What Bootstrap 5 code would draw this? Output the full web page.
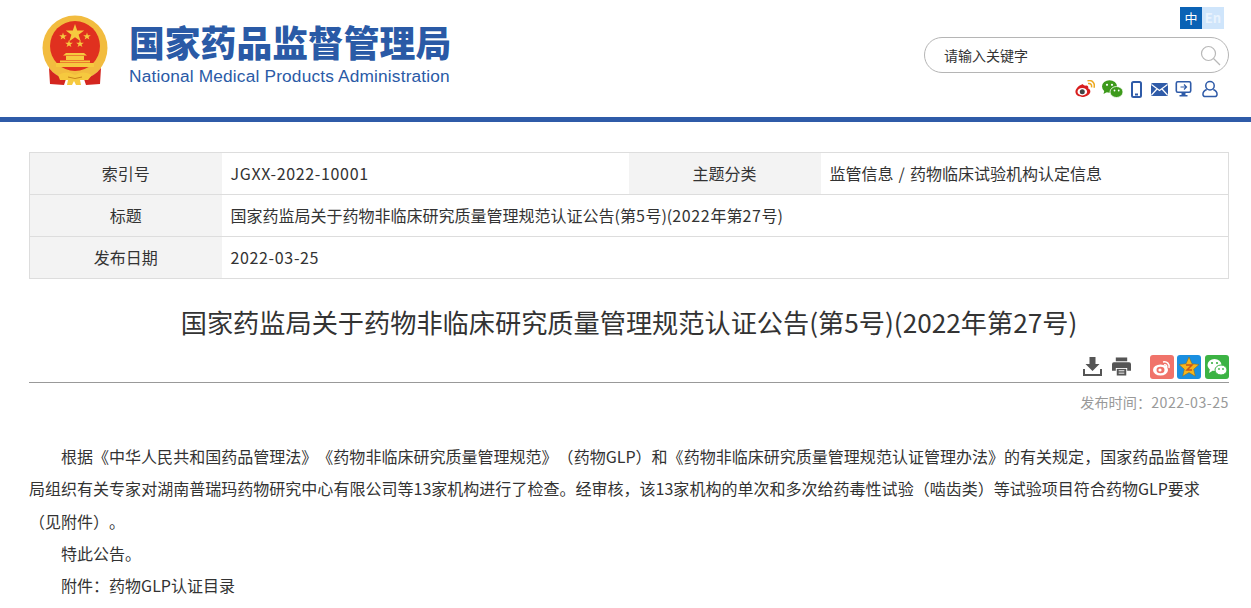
<!DOCTYPE html>
<html lang="zh-CN">
<head>
<meta charset="utf-8">
<title>国家药品监督管理局</title>
<link href="https://cdn.jsdelivr.net/npm/bootstrap@5.3.0/dist/css/bootstrap.min.css" rel="stylesheet">
<style>
html,body{margin:0;background:#fff;}
body{font-family:"Noto Sans CJK SC",sans-serif;font-size:16px;color:#333;text-spacing-trim:space-all;}
.site-head{height:122px;border-bottom:5px solid #2f5ba8;padding:0 22px 0 42px;}
.emblem{width:66px;height:70px;margin-top:15px;flex:none;}
.brand{margin-left:21px;margin-top:20px;width:330px;}
.brand-cn{font-weight:900;font-size:35.8px;line-height:43px;color:#2a5aa6;white-space:nowrap;}
.brand-en{font-family:"Liberation Sans",sans-serif;font-size:17.3px;letter-spacing:.17px;line-height:20px;color:#2a5aa6;margin-top:3px;white-space:nowrap;}
.head-tools{width:305px;}
.lang{height:22px;margin-top:7px;margin-right:5px;font-size:13px;}
.lang span{width:22px;height:22px;line-height:22px;text-align:center;display:block;}
.lang-on{background:#0a62b5;color:#fff;}
.lang-off{background:#cfe5fb;color:#e9f3fd;font-weight:700;}
.searchbox{height:36px;border:1px solid #b5b5b5;border-radius:18px;margin-top:8px;padding:0 7px 0 20px;}
.searchbox span{font-size:14px;color:#333;margin-left:-1px;}
.social{margin-top:5px;height:22px;padding-right:11px;}
.page-wrap{padding:0 22px 0 29px;}
.info-table{width:1199px;margin:30px 0 0;table-layout:fixed;font-size:16px;border-color:#ddd;color:#333;}
.info-table td{height:42px;padding:0 9px 2px;vertical-align:middle;line-height:22px;border-left-width:0;border-right-width:0;}
.info-table td:first-child{border-left-width:1px;}
.info-table td:last-child{border-right-width:1px;}
.info-table .lbl{background:#f3f3f3;text-align:center;--bs-table-bg:#f3f3f3;}
.lat{letter-spacing:.65px;}
.lat-s{letter-spacing:.5px;}
.wide-sep{word-spacing:1.5px;}
.doc-title{font-weight:400;font-size:26.2px;line-height:40px;text-align:center;margin:23px 0 0;color:#333;white-space:nowrap;}
.share-row{height:40px;margin-top:1px;padding-top:8px;border-bottom:1px solid #999;}
.meta-line{font-size:14.2px;line-height:20px;color:#999;text-align:right;margin-top:9px;}
.article{margin-top:28px;font-size:16px;line-height:32.3px;color:#333;letter-spacing:.02px;}
.article p{margin:0;text-indent:32px;}
svg{display:block;flex:none;}
.gap-7{margin-left:7px;}.gap-8{margin-left:8px;}.gap-9{margin-left:9px;}.gap-10{margin-left:10px;}.gap-19{margin-left:19px;}.gap-3{margin-left:3px;}.gap-4{margin-left:4px;}
</style>
</head>
<body>
<header class="site-head d-flex justify-content-between">
  <div class="d-flex">
    <svg class="emblem" viewBox="0 0 66 70">
      <circle cx="33" cy="33" r="32.500" fill="#f2bc3f"/>
      <circle cx="33" cy="31" r="25" fill="#e0301f"/>
      <path d="M33 9l2.200 6.600h7l-5.600 4.100 2.100 6.600L33 22.200l-5.700 4.100 2.100-6.600-5.600-4.100h7z" fill="#f6c93f"/>
      <g fill="#f6c93f"><path d="M21 17.500l.9 2.700h2.900l-2.300 1.700.9 2.700-2.400-1.700-2.400 1.700.9-2.700-2.300-1.700h2.900z"/><path d="M45 17.500l.9 2.700h2.900l-2.300 1.700.9 2.700-2.400-1.700-2.400 1.700.9-2.700-2.300-1.700h2.900z"/><path d="M27 25l.9 2.700h2.900l-2.300 1.700.9 2.700-2.400-1.700-2.400 1.700.9-2.700-2.300-1.700h2.900z"/><path d="M38 25l.9 2.700h2.900l-2.300 1.700.9 2.700-2.400-1.700-2.400 1.700.9-2.700-2.300-1.700h2.900z"/>
      <path d="M24 38h18l3 2.500H21z"/><rect x="24" y="41" width="18" height="4"/><rect x="18" y="45.500" width="30" height="2"/><rect x="14" y="48" width="38" height="4"/></g>
      <path d="M7 50 Q16 61 33 61 Q50 61 59 50 L59 53 Q50 65 33 65 Q16 65 7 53Z" fill="#f2bc3f"/>
      <path d="M7 53 Q13 61 24 64 L22 70 L8 69Z M59 53 Q53 61 42 64 L44 70 L58 69Z" fill="#d4261f"/>
      <path d="M16 60 q8.500-5 17 0 q8.500-5 17 0 l-4 5 h-8 l1 5 h-5 l-2-4 -2 4 h-5 l1-5 h-8z" fill="#f6c93f"/>
      <path d="M26 62 q7 3 14 0" fill="none" stroke="#c9841c" stroke-width="1"/>
    </svg>
    <div class="brand">
      <div class="brand-cn">国家药品监督管理局</div>
      <div class="brand-en">National Medical Products Administration</div>
    </div>
  </div>
  <div class="head-tools">
    <div class="lang d-flex justify-content-end"><span class="lang-on">中</span><span class="lang-off">En</span></div>
    <div class="searchbox d-flex align-items-center justify-content-between">
      <span>请输入关键字</span>
      <svg width="21" height="21" viewBox="0 0 21 21" fill="none" stroke="#b8b8b8" stroke-width="1.200"><circle cx="8.500" cy="8.500" r="7"/><path d="M13.500 13.500L20 20"/></svg>
    </div>
    <div class="social d-flex justify-content-end align-items-center">
      <svg width="20" height="18" viewBox="0 0 20 18"><path d="M8 4C3 5.500 0 9.500 .5 12.500c.7 3.500 5 5 9 4.200s6.500-3.700 5.700-6.200c-.3-1-1.200-1.500-2-1.900.6-2.300-.7-3.200-2.200-3-1 .1-2 .2-3.500-1.600z" fill="#d81e1e"/><ellipse cx="7.300" cy="11.700" rx="4.800" ry="3.700" fill="#fff"/><circle cx="7.300" cy="11.700" r="2.500" fill="#444"/><path d="M13 3.500c2.700-.5 4 1 3.500 3.800M12.500 .7c5-1 7.800 2.500 6.500 7" fill="none" stroke="#eda91f" stroke-width="1.500"/></svg>
      <svg class="gap-7" width="21" height="18" viewBox="0 0 21 18" fill="#3d9a1b"><ellipse cx="7.500" cy="6.500" rx="7.500" ry="6.200"/><path d="M2.500 10l-1 4 4.500-2.500z"/><ellipse cx="14.500" cy="12" rx="6.500" ry="5.500" stroke="#fff" stroke-width=".8"/><circle cx="5" cy="4.800" r="1.100" fill="#fff"/><circle cx="10" cy="4.800" r="1.100" fill="#fff"/><circle cx="12.500" cy="10.500" r=".9" fill="#fff"/><circle cx="16.700" cy="10.500" r=".9" fill="#fff"/></svg>
      <svg class="gap-8" width="11" height="17" viewBox="0 0 11 17" fill="none" stroke="#2f5ba8" stroke-width="2"><rect x="1" y="1" width="9" height="15" rx="1.500"/><path d="M4 13.500h3"/></svg>
      <svg class="gap-9" width="17" height="13" viewBox="0 0 17 13"><rect width="17" height="13" rx="1.500" fill="#2f5ba8"/><path d="M.5 1.500L8.500 7.500 16.500 1.500M.5 12L6 6M16.500 12L11 6" fill="none" stroke="#fff" stroke-width="1.200"/></svg>
      <svg class="gap-7" width="17" height="16" viewBox="0 0 16 16"><rect x=".8" y=".8" width="14.400" height="10.400" rx="1.500" fill="none" stroke="#2f5ba8" stroke-width="1.600"/><path d="M5 6h6M8.500 3.500L11 6 8.500 8.500" fill="none" stroke="#2f5ba8" stroke-width="1.200"/><path d="M6 12h4v2h2v1.500H4V14h2z" fill="#2f5ba8"/></svg>
      <svg class="gap-10" width="16" height="18" viewBox="0 0 17 18" fill="none" stroke="#2f5ba8" stroke-width="1.600"><circle cx="8.500" cy="5.500" r="4.500"/><path d="M5 9.500C2.500 10.500 1 12 1 14.500 1 16 2 17 3.500 17h10c1.500 0 2.500-1 2.500-2.500 0-2.500-1.500-4-4-5"/></svg>
    </div>
  </div>
</header>

<main class="page-wrap">
  <table class="table table-bordered info-table">
    <colgroup><col style="width:192px"><col style="width:407px"><col style="width:192px"><col style="width:408px"></colgroup>
    <tbody>
      <tr><td class="lbl">索引号</td><td><span class="lat">JGXX-2022-10001</span></td><td class="lbl">主题分类</td><td class="wide-sep">监管信息 / 药物临床试验机构认定信息</td></tr>
      <tr><td class="lbl">标题</td><td colspan="3">国家药监局关于药物非临床研究质量管理规范认证公告(第<span class="lat">5</span>号)(<span class="lat">2022</span>年第<span class="lat">27</span>号)</td></tr>
      <tr><td class="lbl">发布日期</td><td colspan="3"><span class="lat">2022-03-25</span></td></tr>
    </tbody>
  </table>

  <h1 class="doc-title">国家药监局关于药物非临床研究质量管理规范认证公告(第5号)(2022年第27号)</h1>

  <div class="share-row d-flex justify-content-end align-items-center">
    <svg width="19" height="19" viewBox="0 0 19 19" fill="#555"><path d="M6.500 0h6v7h4l-7 7-7-7h4z"/><path d="M0 12h2v5h15v-5h2v7H0z"/></svg>
    <svg class="gap-10" width="19" height="19" viewBox="0 0 20 19" fill="#555"><path d="M4 0h12v4H4z"/><path d="M2 5h16a2 2 0 0 1 2 2v7h-4v-3H4v3H0V7a2 2 0 0 1 2-2z"/><path d="M5 12h10v7H5z"/><path d="M7 14h6M7 16.500h6" stroke="#fff"/></svg>
    <svg class="gap-19" width="24" height="24" viewBox="0 0 24 24"><rect width="24" height="24" rx="3" fill="#f0736a"/><ellipse cx="10.500" cy="15" rx="7.500" ry="5.500" fill="#fff"/><ellipse cx="10.500" cy="15" rx="4" ry="3.200" fill="#f0736a"/><circle cx="10" cy="15" r="1.600" fill="#fff"/><path d="M13 7c4-1 7 2 6 6M14 10c2-.5 3 .5 2.700 2.500" fill="none" stroke="#fff" stroke-width="1.500"/></svg>
    <svg class="gap-3" width="24" height="24" viewBox="0 0 24 24"><rect width="24" height="24" rx="3" fill="#1a8fe0"/><path d="M12 2l3 6.800 7 .7-5.300 4.700 1.600 7-6.300-3.700-6.300 3.700 1.600-7L2 9.500l7-.7z" fill="#f6b51e" stroke="#8a6a12" stroke-width=".5"/><path d="M9 10h6l-5 5h5" fill="none" stroke="#c9541a" stroke-width="1.500"/></svg>
    <svg class="gap-4" width="24" height="24" viewBox="0 0 24 24"><rect width="24" height="24" rx="3" fill="#3cb344"/><ellipse cx="9.500" cy="10" rx="7" ry="6" fill="#fff"/><path d="M5 14l-1 4 4-2.500z" fill="#fff"/><ellipse cx="16" cy="15" rx="6" ry="5" fill="#fff" stroke="#3cb344"/><circle cx="7" cy="8" r="1.100" fill="#3cb344"/><circle cx="12" cy="8" r="1.100" fill="#3cb344"/><circle cx="14" cy="14" r=".9" fill="#3cb344"/><circle cx="18" cy="14" r=".9" fill="#3cb344"/></svg>
  </div>

  <div class="meta-line">发布时间：<span class="lat-s">2022-03-25</span></div>

  <article class="article">
    <p>根据《中华人民共和国药品管理法》《药物非临床研究质量管理规范》（药物GLP）和《药物非临床研究质量管理规范认证管理办法》的有关规定，国家药品监督管理局组织有关专家对湖南普瑞玛药物研究中心有限公司等13家机构进行了检查。经审核，该13家机构的单次和多次给药毒性试验（啮齿类）等试验项目符合药物GLP要求（见附件）。</p>
    <p>特此公告。</p>
    <p>附件：药物GLP认证目录</p>
  </article>
</main>
</body>
</html>
